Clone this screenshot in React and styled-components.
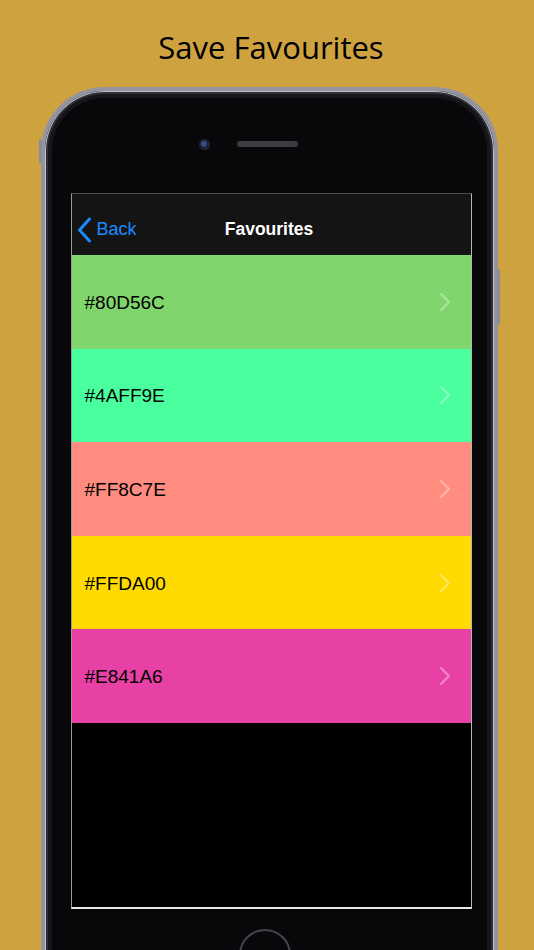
import React from "react";
import styled, { createGlobalStyle } from "styled-components";

const Global = createGlobalStyle`
  html, body { margin: 0; padding: 0; background: #cfa240; }
  * { box-sizing: border-box; }
`;

const Page = styled.div`
  width: 534px;
  height: 950px;
  overflow: hidden;
  background: #cfa240;
  display: flex;
  flex-direction: column;
  align-items: center;
`;

const Title = styled.h1`
  margin: 29px 0 0 8px;
  font-family: "Open Sans", "Noto Sans", sans-serif;
  font-weight: 500;
  font-size: 31px;
  line-height: 36px;
  color: #000;
`;

const Phone = styled.div`
  position: relative;
  margin: 22px 0 0 5px;
  width: 457px;
  height: 960px;
  flex-shrink: 0;
  border-radius: 64px 64px 0 0;
  background: #08080b;
  border: 4px solid #9494a0;
  box-shadow: inset 0 0 0 1px #c0c0ca, inset 0 0 0 3px #2e2e34, inset 0 0 0 7px #16161a;
  display: flex;
  flex-direction: column;
  align-items: center;
`;

const SideButton = styled.div`
  position: absolute;
  ${(p) => (p.$side === "left" ? "left: -6px;" : "right: -6px;")}
  top: ${(p) => p.$top}px;
  width: 3px;
  height: ${(p) => p.$h}px;
  background: #8c8c98;
  border-radius: 2px;
`;

const TopBar = styled.div`
  height: 102px;
  width: 100%;
  display: flex;
  align-items: center;
  justify-content: center;
  gap: 27px;
  padding-right: 43px;
  padding-top: 4px;
`;

const Camera = styled.div`
  width: 11px;
  height: 11px;
  border-radius: 50%;
  background: radial-gradient(circle at 45% 45%, #3a4a8a 0 25%, #1a1c30 45%, #2a2a33 75%, #0a0a0d 100%);
`;

const Speaker = styled.div`
  width: 61px;
  height: 6px;
  border-radius: 3px;
  background: #3c3c40;
`;

const Screen = styled.div`
  width: 401px;
  height: 716px;
  margin-left: 3px;
  background: #000;
  border-left: 1px solid #9a9a9a;
  border-right: 1px solid #b8b8a8;
  border-top: 1px solid #4a4a4a;
  border-bottom: 2px solid #e8e8e8;
  display: flex;
  flex-direction: column;
  flex-shrink: 0;
`;

const NavBar = styled.div`
  position: relative;
  height: 61px;
  padding-top: 10px;
  background: #141414;
  display: flex;
  align-items: center;
  justify-content: center;
  flex-shrink: 0;
`;

const BackButton = styled.div`
  position: absolute;
  left: 5px;
  top: 10px;
  bottom: 0;
  display: flex;
  align-items: center;
  gap: 5px;
  color: #1a8cff;
  font-family: "Liberation Sans", Arial, sans-serif;
  font-size: 18px;
`;

const NavTitle = styled.div`
  color: #fff;
  font-family: "Liberation Sans", Arial, sans-serif;
  font-weight: 700;
  font-size: 17.5px;
  margin-left: -4px;
`;

const Row = styled.div`
  height: 93.6px;
  background: ${(p) => p.$color};
  display: flex;
  align-items: center;
  justify-content: space-between;
  padding: 0 20px 0 13px;
  flex-shrink: 0;
`;

const RowText = styled.span`
  font-family: "Liberation Sans", Arial, sans-serif;
  font-size: 19px;
  color: #000;
  margin-top: 2px;
`;

const HomeButton = styled.div`
  margin-top: 20px;
  margin-left: -10px;
  width: 52px;
  height: 52px;
  border-radius: 50%;
  border: 2px solid #44444c;
  flex-shrink: 0;
`;

const ChevronLeft = () => (
  <svg width="15" height="26" viewBox="0 0 15 26">
    <path d="M12.5 2 L2.5 13 L12.5 24" fill="none" stroke="#1a8cff" strokeWidth="3" strokeLinecap="round" strokeLinejoin="round" />
  </svg>
);

const ChevronRight = () => (
  <svg width="12" height="20" viewBox="0 0 12 20">
    <path d="M2 2 L10 10 L2 18" fill="none" stroke="rgba(255,255,255,0.35)" strokeWidth="2.4" strokeLinecap="round" strokeLinejoin="round" />
  </svg>
);

const colors = ["#80D56C", "#4AFF9E", "#FF8C7E", "#FFDA00", "#E841A6"];

export default function App() {
  return (
    <>
      <Global />
      <Page>
        <Title>Save Favourites</Title>
        <Phone>
          <SideButton $side="left" $top={48} $h={24} />
          <SideButton $side="right" $top={178} $h={56} />
          <TopBar>
            <Camera />
            <Speaker />
          </TopBar>
          <Screen>
            <NavBar>
              <BackButton>
                <ChevronLeft />
                <span>Back</span>
              </BackButton>
              <NavTitle>Favourites</NavTitle>
            </NavBar>
            {colors.map((c) => (
              <Row key={c} $color={c}>
                <RowText>{c}</RowText>
                <ChevronRight />
              </Row>
            ))}
          </Screen>
          <HomeButton />
        </Phone>
      </Page>
    </>
  );
}
